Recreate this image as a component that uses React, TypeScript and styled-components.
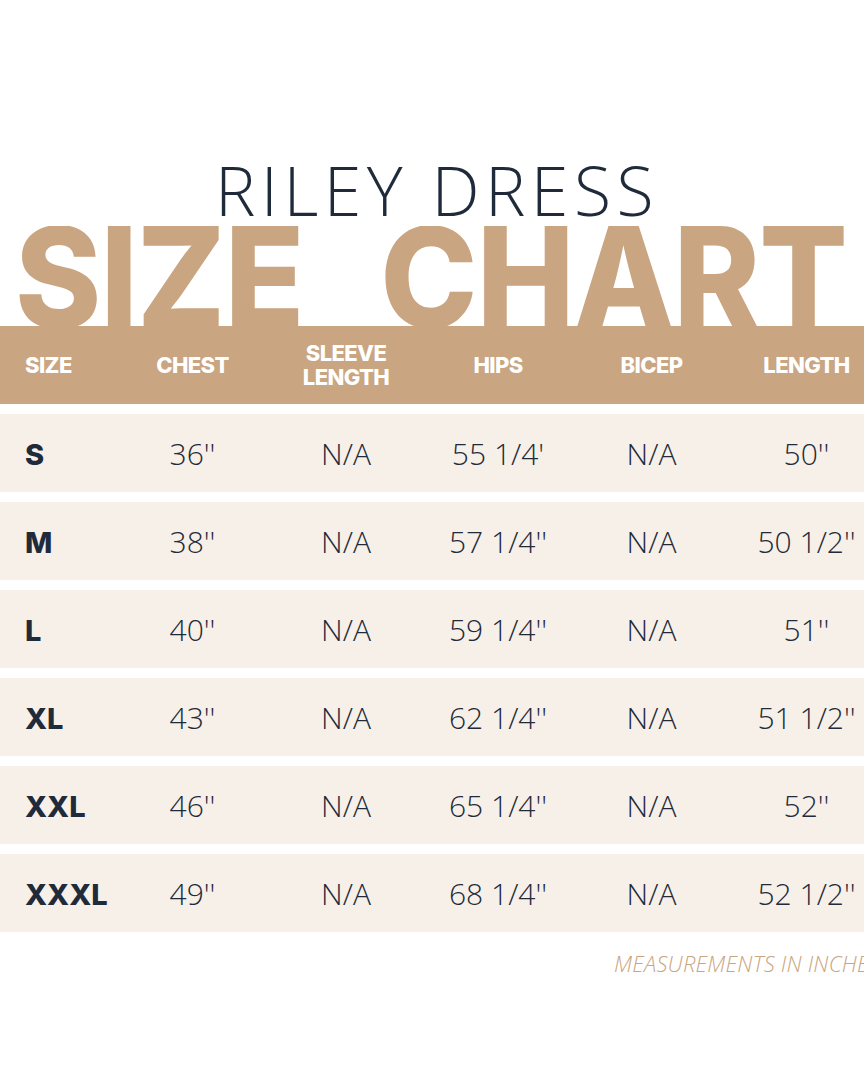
import React from "react";
import styled, { createGlobalStyle } from "styled-components";

const TAN = "#C9A581";
const NAVY = "#1F2B3A";
const ROW_BG = "#F7F0E9";

const Global = createGlobalStyle`
  html, body { margin: 0; padding: 0; background: #ffffff; overflow: hidden; }
  * { box-sizing: border-box; }
`;

const Page = styled.div`
  width: 864px;
  height: 1080px;
  overflow: hidden;
  background: #ffffff;
  padding-top: 150px;
  display: flex;
  flex-direction: column;
`;

const Subtitle = styled.h2`
  margin: 0;
  text-align: center;
  font-family: "Open Sans", sans-serif;
  font-weight: 300;
  font-size: 68px;
  line-height: 80px;
  letter-spacing: 5.5px;
  color: ${NAVY};
  padding-left: 10px;
`;

const BigClip = styled.div`
  height: 100px;
  margin-top: -4px;
  overflow: hidden;
  display: flex;
  justify-content: center;
  padding-right: 2px;
`;

const BigInner = styled.div`
  flex-shrink: 0;
  display: flex;
  gap: 82px;
  transform: scaleX(0.935);
  transform-origin: center;
`;

const BigWord = styled.span<{ $ls: number }>`
  font-family: Inter, sans-serif;
  font-weight: 800;
  font-size: 140px;
  line-height: 1;
  margin-top: -19px;
  color: ${TAN};
  letter-spacing: ${(p) => p.$ls}px;
`;

const cols = "115px 155px 152px 152px 155px 155px";

const Band = styled.div`
  height: 78px;
  background: ${TAN};
  display: grid;
  grid-template-columns: ${cols};
  align-items: center;
`;

const HeadCell = styled.div<{ $left?: boolean }>`
  font-family: Inter, sans-serif;
  font-weight: 800;
  font-size: 22px;
  line-height: 24px;
  letter-spacing: -0.6px;
  color: #ffffff;
  text-align: ${(p) => (p.$left ? "left" : "center")};
  padding-left: ${(p) => (p.$left ? "25px" : "0")};
  white-space: nowrap;
`;

const Rows = styled.div`
  display: flex;
  flex-direction: column;
  gap: 10px;
  padding-top: 10px;
`;

const Row = styled.div`
  height: 78px;
  background: ${ROW_BG};
  display: grid;
  grid-template-columns: ${cols};
  align-items: center;
`;

const SizeCell = styled.div`
  padding-left: 25px;
  font-family: Inter, sans-serif;
  font-weight: 800;
  font-size: 29px;
  color: ${NAVY};
  padding-top: 2px;
`;

const ValueCell = styled.div`
  text-align: center;
  font-family: "Open Sans", sans-serif;
  font-weight: 300;
  font-size: 30px;
  color: ${NAVY};
  white-space: nowrap;
`;

const Note = styled.div`
  margin-top: 16px;
  padding-left: 614px;
  font-family: "Open Sans", sans-serif;
  font-weight: 300;
  font-style: italic;
  font-size: 22px;
  letter-spacing: 0.2px;
  color: ${TAN};
  white-space: nowrap;
`;

const headers = ["SIZE", "CHEST", "SLEEVE\nLENGTH", "HIPS", "BICEP", "LENGTH"];

const data: [string, string, string, string, string, string][] = [
  ["S", "36''", "N/A", "55 1/4'", "N/A", "50''"],
  ["M", "38''", "N/A", "57 1/4''", "N/A", "50 1/2''"],
  ["L", "40''", "N/A", "59 1/4''", "N/A", "51''"],
  ["XL", "43''", "N/A", "62 1/4''", "N/A", "51 1/2''"],
  ["XXL", "46''", "N/A", "65 1/4''", "N/A", "52''"],
  ["XXXL", "49''", "N/A", "68 1/4''", "N/A", "52 1/2''"],
];

export default function App() {
  return (
    <>
      <Global />
      <Page>
        <Subtitle>RILEY DRESS</Subtitle>
        <BigClip>
          <BigInner>
            <BigWord $ls={-1}>SIZE</BigWord>
            <BigWord $ls={-1}>CHART</BigWord>
          </BigInner>
        </BigClip>
        <Band>
          {headers.map((h, i) => (
            <HeadCell key={h} $left={i === 0}>
              {h.split("\n").map((l) => (
                <div key={l}>{l}</div>
              ))}
            </HeadCell>
          ))}
        </Band>
        <Rows>
          {data.map((r) => (
            <Row key={r[0]}>
              <SizeCell>{r[0]}</SizeCell>
              {r.slice(1).map((v, i) => (
                <ValueCell key={i}>{v}</ValueCell>
              ))}
            </Row>
          ))}
        </Rows>
        <Note>MEASUREMENTS IN INCHES</Note>
      </Page>
    </>
  );
}
